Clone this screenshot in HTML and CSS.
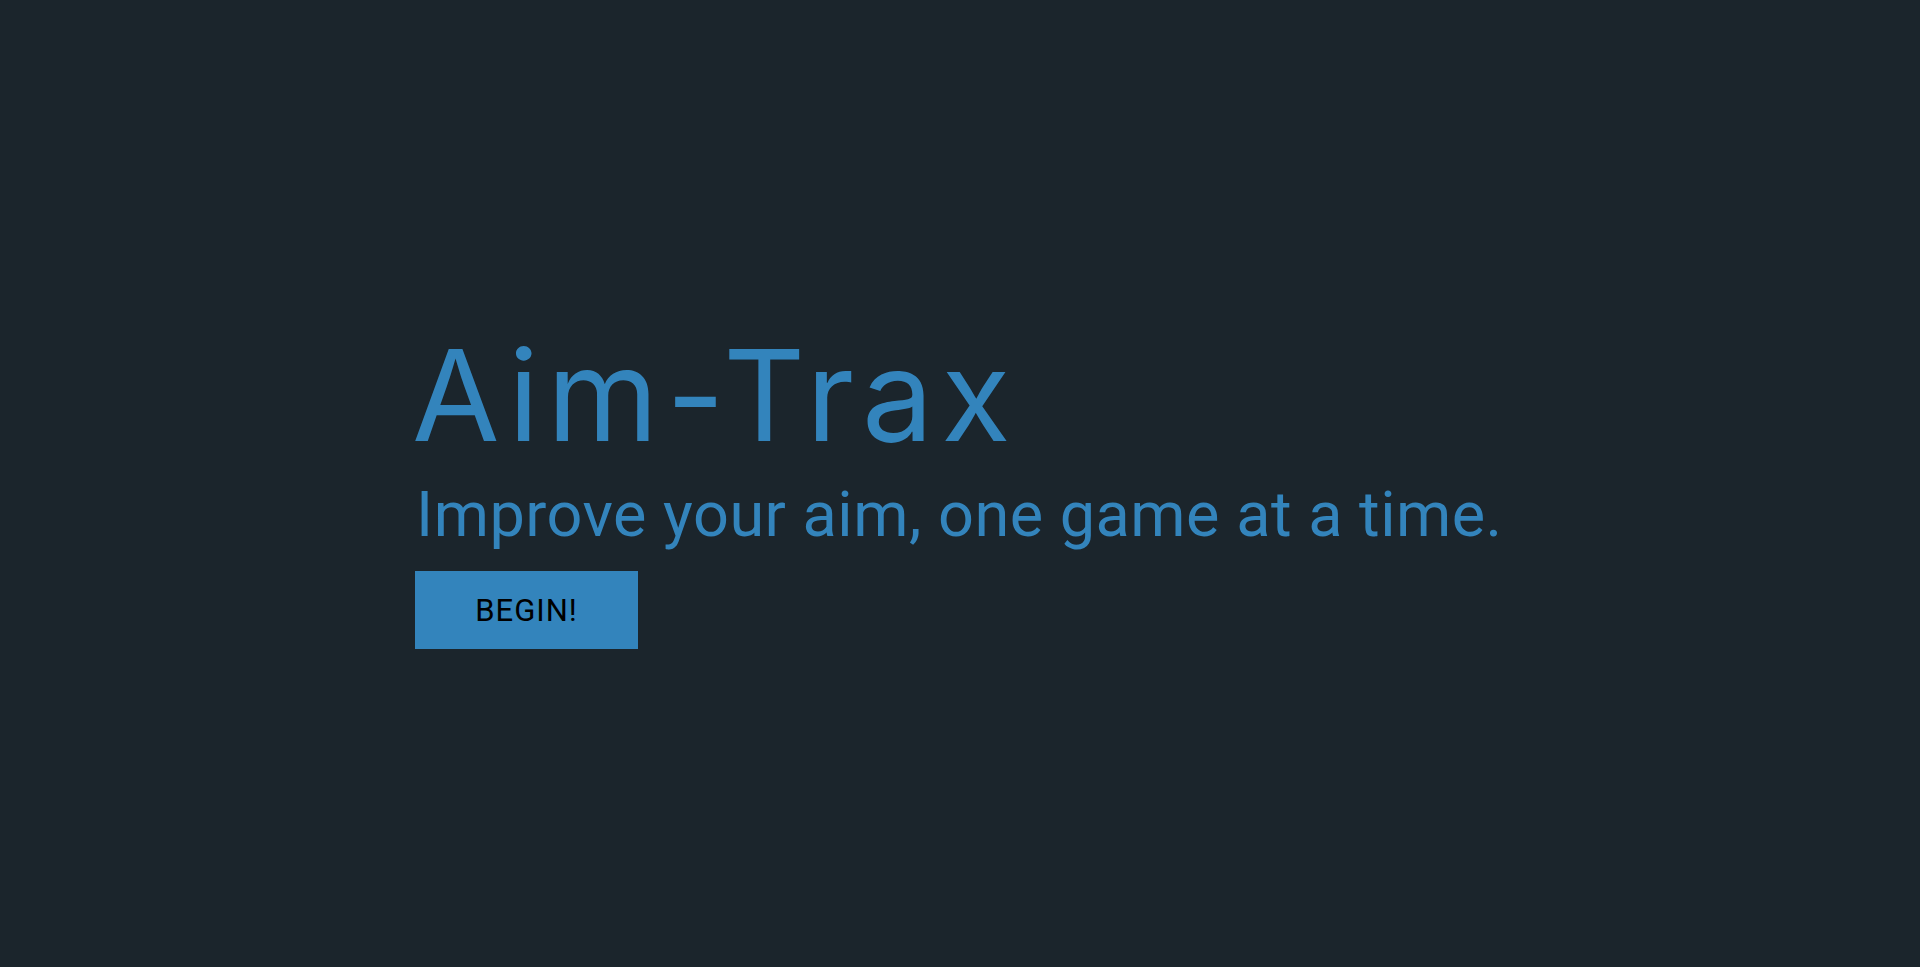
FILE: index.html
```html
<!DOCTYPE html>
<html lang="en">
<head>
<meta charset="utf-8">
<title>Aim-Trax</title>
<link rel="stylesheet" href="styles.css">
</head>
<body>
<main class="hero">
  <h1 class="title">Aim-Trax</h1>
  <p class="tagline">Improve your aim, one game at a time.</p>
  <button class="begin" type="button">BEGIN!</button>
</main>
</body>
</html>
```
FILE: styles.css
```css
html, body {
  margin: 0;
  padding: 0;
  height: 100%;
}
body {
  background: #1b252c;
  color: #3384bc;
}
.hero {
  display: flex;
  flex-direction: column;
  align-items: flex-start;
  padding: 320px 0 0 412px;
}
.title {
  margin: 0;
  font-family: Inter, "Liberation Sans", sans-serif;
  font-weight: 400;
  font-size: 127px;
  line-height: 150px;
  letter-spacing: 8px;
}
.tagline {
  margin: 8px 0 0 4px;
  font-family: Roboto, "Liberation Sans", sans-serif;
  font-size: 63px;
  line-height: 74px;
  letter-spacing: 0.5px;
}
.begin {
  margin: 19px 0 0 3px;
  width: 223px;
  height: 78px;
  border: 0;
  background: #3384bc;
  color: #000;
  font-family: Roboto, "Liberation Sans", sans-serif;
  font-size: 31px;
  letter-spacing: 1px;
  padding: 0;
}
```
